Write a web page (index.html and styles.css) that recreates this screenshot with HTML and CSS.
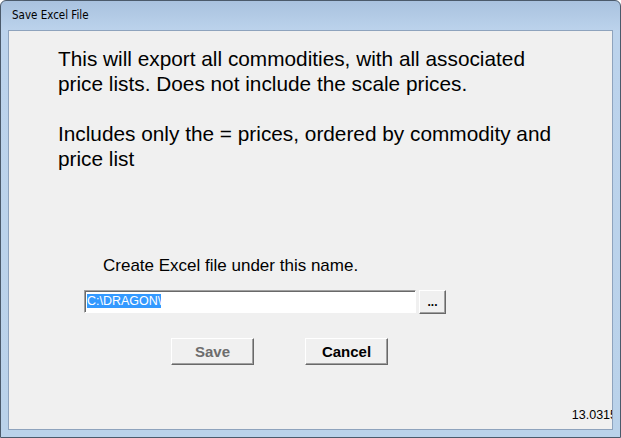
FILE: index.html
```html
<!DOCTYPE html>
<html lang="en">
<head>
  <meta charset="UTF-8">
  <title>Save Excel File</title>
  <link rel="stylesheet" href="styles.css">
</head>
<body>
  <div class="window">
    <div class="titlebar">Save Excel File</div>
    <div class="client">
      <div class="info">
        <p>This will export all commodities, with all associated<br>price lists. Does not include the scale prices.</p>
        <p>Includes only the = prices, ordered by commodity and<br>price list</p>
      </div>
      <div class="file">
        <div class="caption">Create Excel file under this name.</div>
        <div class="row">
          <div class="field"><span class="sel">C:\DRAGON\</span></div>
          <button class="browse">...</button>
        </div>
      </div>
      <div class="actions">
        <button class="btn" disabled>Save</button>
        <button class="btn">Cancel</button>
      </div>
      <div class="version"><span>13.0315</span></div>
    </div>
  </div>
</body>
</html>
```

FILE: styles.css
```css
html,body{margin:0;padding:0;}
body{width:621px;height:438px;overflow:hidden;background:#fff;font-family:"Liberation Sans",Arial,sans-serif;}
.window{box-sizing:border-box;width:621px;height:438px;border:1px solid #4b5a6b;border-radius:6px 6px 0 0;background:linear-gradient(#a9c2df,#bcd3ec 30px,#bad2ea);padding:0 7px 7px 7px;display:flex;flex-direction:column;}
.titlebar{height:29px;line-height:28px;color:#000;padding-left:4px;font-family:"DejaVu Sans Condensed","DejaVu Sans",sans-serif;font-size:11.5px;}
.client{flex:1;background:#f0f0f0;border:1px solid #8ea3bd;display:flex;flex-direction:column;overflow:hidden;}
.info{padding:15px 0 0 49px;font-size:20.8px;line-height:25px;color:#000;}
.info p{margin:0 0 25px 0;}
.file{margin-top:60px;padding-left:75px;}
.caption{font-size:17px;line-height:20px;padding-left:19px;}
.row{display:flex;gap:3px;margin-top:14px;}
.field{box-sizing:border-box;width:332px;height:23px;background:#fff;border:1px solid;border-color:#a0a0a0 #fff #fff #a0a0a0;box-shadow:inset 1px 1px 0 #696969;padding:3px 0 0 2px;font-size:12.5px;line-height:15px;}
.sel{background:#3399ff;color:#fff;}
button{font-family:"Liberation Sans",Arial,sans-serif;background:#f0f0f0;border:1px solid;border-color:#fff #696969 #696969 #fff;box-shadow:inset -1px -1px 0 #a0a0a0;padding:0;}
.browse{width:27px;height:24px;font-size:12px;font-weight:bold;line-height:20px;}
.actions{display:flex;gap:51px;padding-left:162px;margin-top:24px;}
.btn{width:83px;height:27px;font-size:15px;font-weight:bold;color:#000;}
.btn:disabled{color:#6d6d6d;}
.version{margin-top:auto;text-align:right;font-size:12.5px;padding:0 0 6px 0;height:15px;overflow:hidden;}
.version span{display:inline-block;margin-right:-5px;}
```
